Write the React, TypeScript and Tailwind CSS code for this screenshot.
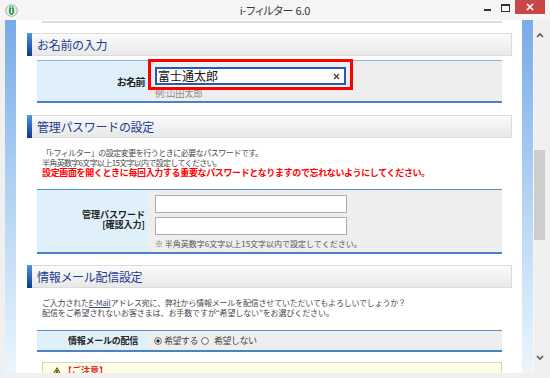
import React from "react";

function SectionHeader({ title, className }: { title: string; className: string }) {
  return (
    <div className={`ml-[11px] mr-[10px] h-[23px] shrink-0 flex border-y border-r border-[#dcdcdc] bg-linear-to-b from-[#fbfbfb] to-[#e8e8e8] ${className}`}>
      <div className="w-[5px] -my-px bg-linear-to-b from-[#4f95e3] to-[#0a3a8c]" />
      <div className="pl-[5px] flex items-center text-[12px] tracking-[-0.3px] text-[#1d3d8f] whitespace-nowrap">
        {title}
      </div>
    </div>
  );
}

function Radio({ checked }: { checked: boolean }) {
  return (
    <svg width="8" height="8" viewBox="0 0 8 8" className="shrink-0">
      <circle cx="4" cy="4" r="3.4" fill="#fff" stroke="#555" strokeWidth="0.9" />
      {checked && <circle cx="4" cy="4" r="1.7" fill="#222" />}
    </svg>
  );
}

function Chevron({ up }: { up: boolean }) {
  return (
    <svg width="8" height="6" viewBox="0 0 8 6" className="shrink-0">
      <path d={up ? "M1 5 L4 2 L7 5" : "M1 1 L4 4 L7 1"} fill="none" stroke="#5a5a5a" strokeWidth="1.6" />
    </svg>
  );
}

export default function App() {
  return (
    <div className="w-[550px] h-[378px] bg-[#f0f0f0] flex flex-col overflow-hidden [font-family:'Noto_Sans_CJK_JP',sans-serif]">
      {/* title bar */}
      <div className="h-[20px] shrink-0 grid grid-cols-[1fr_auto_1fr] bg-[#f5f5f5]">
        <div className="flex items-center pl-[5px]">
          <svg width="13" height="13" viewBox="0 0 13 13">
            <circle cx="6.5" cy="6.5" r="5.8" fill="#e4ebe6" stroke="#9aa9a6" strokeWidth="0.9" />
            <ellipse cx="6.5" cy="6.5" rx="2.6" ry="4.4" fill="#2fa34a" />
            <rect x="5.9" y="5" width="1.3" height="4" fill="#fff" />
            <circle cx="6.5" cy="3.6" r="0.8" fill="#fff" />
          </svg>
        </div>
        <div className="flex items-center justify-center text-[11px] tracking-[-0.2px] text-[#3a3a3a] [font-feature-settings:'palt'] whitespace-nowrap">
          i-フィルター 6.0
        </div>
        <div className="flex justify-end items-start pr-[5px]">
          <div className="mt-[9px] w-[7px] h-[2px] bg-[#333]" />
          <div className="mt-[4px] ml-[10px] w-[9px] h-[8px] border border-[#333] border-t-2" />
          <div className="ml-[5px] w-[30px] h-[14px] bg-[#c8464a] flex items-center justify-center">
            <svg width="8" height="8" viewBox="0 0 8 8">
              <path d="M1 1 L7 7 M7 1 L1 7" stroke="#fff" strokeWidth="1.6" />
            </svg>
          </div>
        </div>
      </div>

      {/* body */}
      <div className="flex flex-1 min-h-0">
        <div className="w-[5px] bg-[#f0f0f0]" />
        <div className="w-[11px] bg-linear-to-b from-[#78abe8] via-[#b3d3f3] to-[#ebf6fe]" />

        {/* content */}
        <div className="flex-1 bg-white flex flex-col overflow-hidden">
          <div className="mt-[1px] ml-[26px] mr-[20px] h-[2px] shrink-0 bg-[#dcdcd2]" />

          <SectionHeader title="お名前の入力" className="mt-[10px]" />

          {/* table 1 */}
          <div className="mt-[4px] ml-[21px] mr-[20px] shrink-0 flex border-t border-t-[#8fb3dd] border-b-2 border-b-[#4a82c6]">
            <div className="w-[111px] bg-[#dff0fa] flex items-center justify-end pr-[3px] text-[10px] font-bold tracking-[-0.6px] text-[#222]">
              お名前
            </div>
            <div className="flex-1 bg-[#eeeeee] relative pt-[6px] pb-[2px] pl-[7px]">
              <div className="w-[191px] h-[18px] border-2 border-[#1f5cb6] bg-white flex items-center pl-[1px] pr-[4px]">
                <span className="flex-1 text-[12px] leading-[14px] text-[#111]">富士通太郎</span>
                <svg width="7" height="7" viewBox="0 0 7 7">
                  <path d="M1 1 L6 6 M6 1 L1 6" stroke="#444" strokeWidth="1.4" />
                </svg>
              </div>
              <div className="mt-[4px] h-[10px] text-[9px] leading-[10px] text-[#8a8a8a] whitespace-nowrap">例:山田太郎</div>
              <div className="absolute left-0 top-[-2px] w-[205px] h-[31px] border-[3px] border-[#ff0000]" />
            </div>
          </div>

          <SectionHeader title="管理パスワードの設定" className="mt-[12px]" />

          <div className="mt-[10px] ml-[26px] shrink-0 text-[8px] leading-[10px] text-[#4a4a4a] whitespace-nowrap">
            <div className="h-[10px] tracking-[-0.5px]">「i-フィルター」の設定変更を行うときに必要なパスワードです。</div>
            <div className="h-[10px] tracking-[-0.68px]">半角英数字6文字以上15文字以内で設定してください。</div>
            <div className="h-[10px] text-[9px] leading-[10px] font-bold text-[#ff0000] tracking-[-0.36px]">
              設定画面を開くときに毎回入力する重要なパスワードとなりますので忘れないようにしてください。
            </div>
          </div>

          {/* table 2 */}
          <div className="mt-[11px] ml-[21px] mr-[20px] shrink-0 flex border-t border-t-[#5b8fcc] border-b-2 border-b-[#4a82c6]">
            <div className="w-[111px] bg-[#dff0fa] flex flex-col items-end justify-center pr-[3px] pb-[3px] text-[9px] leading-[10px] font-bold text-[#222] whitespace-nowrap">
              <div>管理パスワード</div>
              <div>[確認入力]</div>
            </div>
            <div className="flex-1 bg-[#eeeeee] pt-[5px] pb-[3px] pl-[7px]">
              <div className="w-[192px] h-[18px] border border-[#abadb3] bg-white" />
              <div className="mt-[4px] w-[192px] h-[18px] border border-[#abadb3] bg-white" />
              <div className="mt-[4px] h-[10px] text-[8px] leading-[10px] text-[#555] whitespace-nowrap">
                ※ 半角英数字6文字以上15文字以内で設定してください。
              </div>
            </div>
          </div>

          <SectionHeader title="情報メール配信設定" className="mt-[11px]" />

          <div className="mt-[10px] ml-[26px] shrink-0 text-[8px] leading-[10px] text-[#4a4a4a] whitespace-nowrap">
            <div className="h-[10px] tracking-[-0.2px]">
              ご入力された<span className="underline text-[#3a4a6a]">E-Mail</span>アドレス宛に、弊社から情報メールを配信させていただいてもよろしいでしょうか？
            </div>
            <div className="h-[10px] tracking-[-0.1px]">配信をご希望されないお客さまは、お手数ですが“希望しない”をお選びください。</div>
          </div>

          {/* table 3 */}
          <div className="mt-[12px] ml-[21px] mr-[20px] shrink-0 flex border-t border-t-[#5b8fcc] border-b-2 border-b-[#4a82c6]">
            <div className="w-[111px] h-[19px] bg-[#dff0fa] flex items-center justify-end pr-[10px] text-[9px] font-bold tracking-[-0.25px] text-[#222] whitespace-nowrap">
              情報メールの配信
            </div>
            <div className="flex-1 bg-[#eeeeee] flex items-center pl-[6px] text-[9px] tracking-[-0.5px] text-[#444] whitespace-nowrap">
              <Radio checked />
              <span className="ml-[2px]">希望する</span>
              <span className="ml-[3px] flex"><Radio checked={false} /></span>
              <span className="ml-[5px]">希望しない</span>
            </div>
          </div>

          {/* caution box */}
          <div className="mt-[10px] ml-[26px] mr-[20px] h-[40px] shrink-0 border border-[#d6d6c8] bg-[#fffde8] flex items-start pt-[3px] pl-[9px]">
            <svg width="10" height="9" viewBox="0 0 10 9" className="shrink-0 mt-[1px]">
              <path d="M5 0.6 L9.5 8.5 L0.5 8.5 Z" fill="#f6c500" stroke="#333" strokeWidth="0.8" />
              <rect x="4.5" y="3" width="1" height="3" fill="#111" />
              <rect x="4.5" y="6.7" width="1" height="1" fill="#111" />
            </svg>
            <span className="ml-[1px] text-[9px] leading-[10px] font-bold text-[#e02020] whitespace-nowrap">【ご注意】</span>
          </div>
        </div>

        <div className="w-[11px] bg-linear-to-b from-[#78abe8] via-[#b3d3f3] to-[#ebf6fe]" />
        {/* scrollbar */}
        <div className="w-[12px] bg-[#f0f0f0] flex flex-col items-center border-l border-[#f8f8f8]">
          <div className="mt-[12px]"><Chevron up /></div>
          <div className="mt-[112px] w-[11px] h-[90px] bg-[#cdcdcd]" />
          <div className="flex-1" />
          <div className="mb-[12px]"><Chevron up={false} /></div>
        </div>
        <div className="w-[5px] bg-[#f0f0f0]" />
      </div>
      <div className="h-[5px] shrink-0 bg-[#f0f0f0]" />
    </div>
  );
}
